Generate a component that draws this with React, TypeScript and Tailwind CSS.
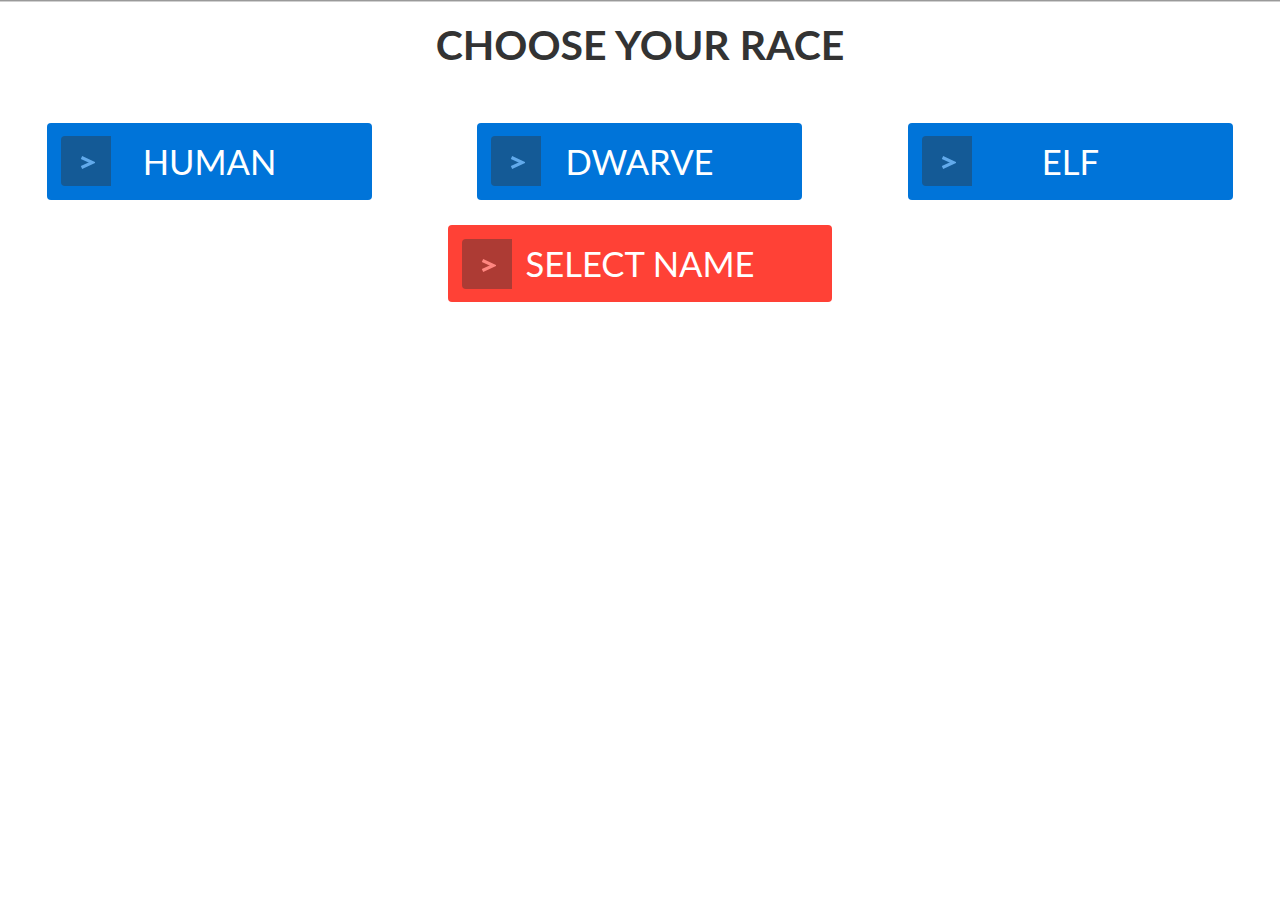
const races = [
  { name: "HUMAN", offset: "" },
  { name: "DWARVE", offset: "ml-[105px]" },
  { name: "ELF", offset: "ml-[106px]" },
];

function ChoiceButton({ label, tone, wide, className = "" }: { label: string; tone: "blue" | "red"; wide?: boolean; className?: string }) {
  const isRed = tone === "red";
  return (
    <button
      className={`relative flex h-[77px] shrink-0 items-center justify-center rounded-[4px] ${
        wide ? "w-[384px]" : "w-[325px]"
      } ${isRed ? "bg-[#ff4136]" : "bg-[#0074d9]"} ${className}`}
    >
      <span
        className={`absolute left-[14px] flex h-[50px] w-[50px] items-center justify-center rounded-l-[4px] pl-[2px] pt-[3px] ${
          isRed ? "top-[14px] bg-[#ad3b34] text-[#ff8680]" : "top-[13px] bg-[#145a96] text-[#62aaeb]"
        }`}
      >
        <svg width="15" height="13" viewBox="0 0 15 13" fill="none">
          <path d="M1.5 1.5 L12.5 6.5 L1.5 11.5" stroke="currentColor" strokeWidth="3.2" strokeLinejoin="miter" />
        </svg>
      </span>
      <span className="text-[34.6px] leading-[42px] text-white">{label}</span>
    </button>
  );
}

export default function App() {
  return (
    <div className="min-h-[922px] bg-white font-['Lato','Liberation_Sans',sans-serif]">
      <div className="h-px bg-[#9a9a9a]" />
      <div className="h-px bg-[#d0d0d0]" />
      <h1 className="mt-[18px] text-center text-[41px] font-bold leading-[50px] text-[#333333]">
        CHOOSE YOUR RACE
      </h1>
      <div className="mt-[53px] flex pl-[47px]">
        {races.map((race) => (
          <ChoiceButton key={race.name} label={race.name} tone="blue" className={race.offset} />
        ))}
      </div>
      <div className="mt-[25px] flex justify-center">
        <ChoiceButton label="SELECT NAME" tone="red" wide />
      </div>
    </div>
  );
}
